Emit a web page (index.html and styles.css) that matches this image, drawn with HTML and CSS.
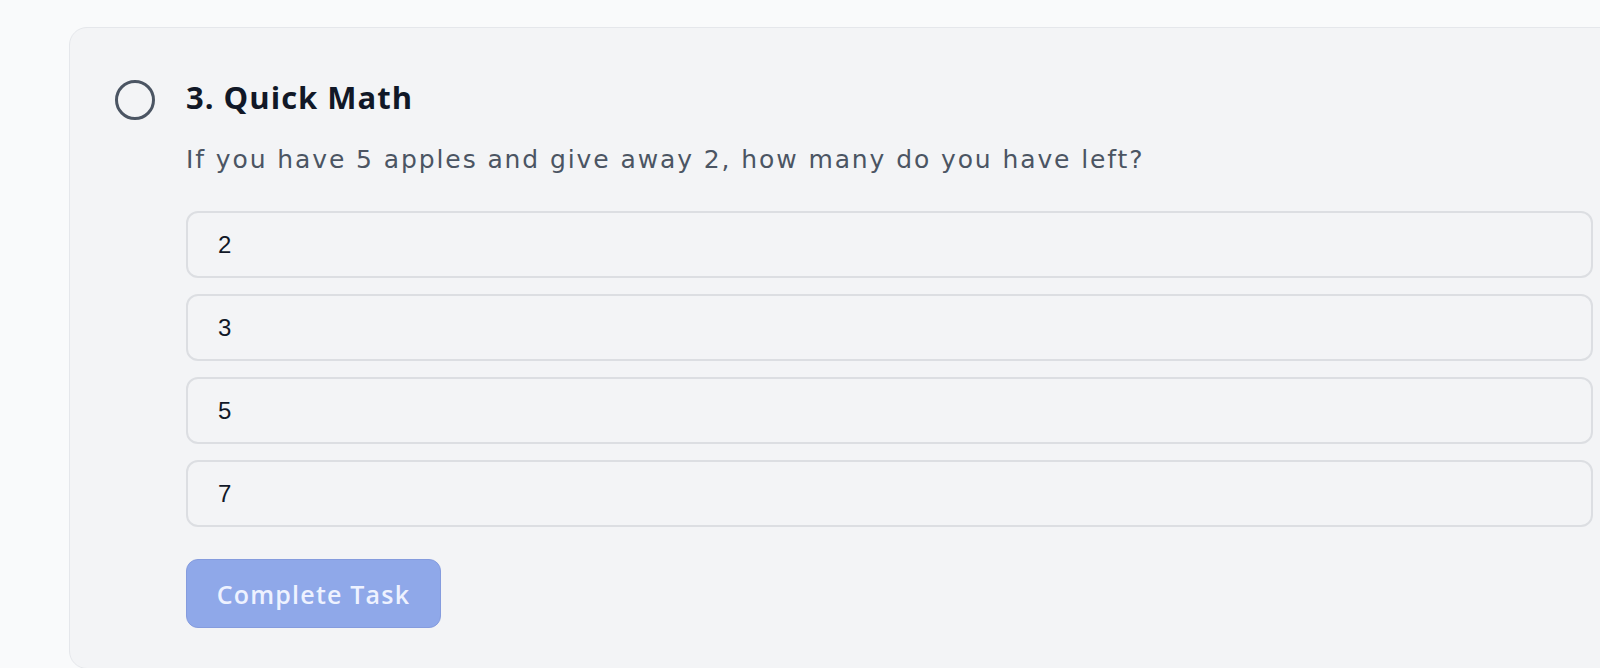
FILE: index.html
```html
<!DOCTYPE html>
<html>
<head>
<meta charset="utf-8">
<link rel="stylesheet" href="styles.css">
</head>
<body>
<main class="page">
  <section class="card">
    <div class="status">
      <svg class="status-icon" width="42" height="42" viewBox="0 0 42 42"><circle cx="21" cy="21" r="18.5" fill="none" stroke="#4b5563" stroke-width="3"/></svg>
    </div>
    <div class="content">
      <h2 class="title">3. Quick Math</h2>
      <p class="question">If you have 5 apples and give away 2, how many do you have left?</p>
      <div class="options">
        <button class="option">2</button>
        <button class="option">3</button>
        <button class="option">5</button>
        <button class="option">7</button>
      </div>
      <button class="submit" disabled>Complete Task</button>
    </div>
  </section>
</main>
</body>
</html>
```
FILE: styles.css
```css
html, body {
  margin: 0;
  padding: 0;
  background: #f9fafb;
  overflow: hidden;
  height: 668px;
}
.page {
  padding: 27px 0 0 69px;
}
.card {
  width: 1573px;
  box-sizing: border-box;
  background: #f3f4f6;
  border: 1.5px solid #e5e7eb;
  border-radius: 18px;
  padding: 52px 48px 40px 44px;
  display: flex;
  gap: 30px;
  font-family: "DejaVu Sans", sans-serif;
}
.status {
  flex: none;
  height: 40px;
  display: flex;
  align-items: center;
}
.status-icon {
  display: block;
}
.content {
  flex: 1;
  display: flex;
  flex-direction: column;
}
.title {
  margin: -3px 0 0;
  font-family: "Open Sans", sans-serif;
  font-size: 31px;
  line-height: 40px;
  font-weight: 700;
  letter-spacing: 1px;
  color: #111827;
}
.question {
  margin: 25px 0 0;
  font-size: 25px;
  line-height: 36px;
  letter-spacing: 1.9px;
  color: #4b5563;
}
.options {
  margin-top: 33px;
  display: flex;
  flex-direction: column;
  gap: 16px;
}
.option {
  height: 67px;
  box-sizing: border-box;
  text-align: left;
  padding: 0 30px;
  background: #f3f4f6;
  border: 2px solid #dcdee2;
  border-radius: 12px;
  font-family: "Liberation Sans", Arial, sans-serif;
  font-size: 24px;
  color: #111827;
}
.submit {
  margin-top: 32px;
  width: 255px;
  height: 69px;
  background: #8fa8e9;
  border: 1.5px solid #859cde;
  border-radius: 12px;
  color: #eef2ff;
  font-family: "Open Sans", sans-serif;
  font-size: 25px;
  font-weight: 600;
  letter-spacing: 1.2px;
}
```
